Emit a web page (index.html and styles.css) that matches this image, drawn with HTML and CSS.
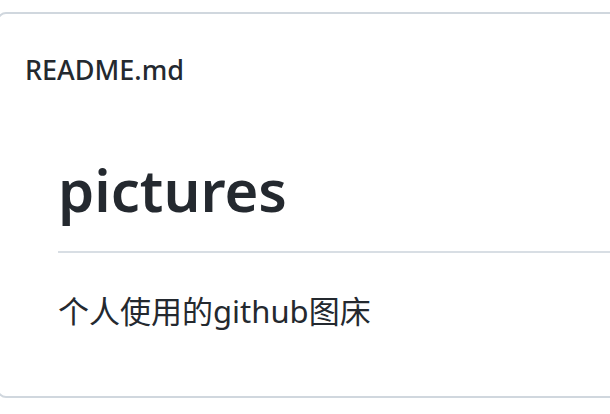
FILE: index.html
```html
<!DOCTYPE html>
<html lang="zh-CN">
<head>
<meta charset="utf-8">
<title>README.md</title>
<link rel="stylesheet" href="styles.css">
</head>
<body>
<div class="readme">
  <div class="readme-header">
    <h2 class="readme-title">README.md</h2>
  </div>
  <article class="markdown-body">
    <h1 class="md-h1">pictures</h1>
    <p class="md-p">个人使用的github图床</p>
  </article>
</div>
</body>
</html>
```
FILE: styles.css
```css
html, body {
  margin: 0;
  padding: 0;
  background: #ffffff;
  overflow: hidden;
}
body {
  width: 610px;
  height: 414px;
  font-family: "Noto Sans", "Open Sans", "Noto Sans CJK SC", sans-serif;
  color: #24292f;
}
.readme {
  box-sizing: border-box;
  margin-top: 12px;
  margin-left: -3px;
  width: 720px;
  height: 386px;
  border: 2px solid #d0d7de;
  border-radius: 9px;
}
.readme-header {
  height: 110px;
  display: flex;
  align-items: center;
  padding: 0 26px;
}
.readme-title {
  margin: 0;
  font-size: 27px;
  font-weight: 500;
  line-height: 1;
}
.markdown-body {
  padding: 0 48px 0 59px;
}
.md-h1 {
  margin: 0;
  font-size: 58px;
  font-weight: 600;
  line-height: 1.25;
  padding-top: 30px;
  padding-bottom: 24px;
  border-bottom: 2px solid #d8dee4;
}
.md-p {
  margin: 35px 0 0;
  font-size: 31px;
  line-height: 1.5;
  font-family: "Noto Sans", "Noto Sans CJK SC", sans-serif;
}
```
